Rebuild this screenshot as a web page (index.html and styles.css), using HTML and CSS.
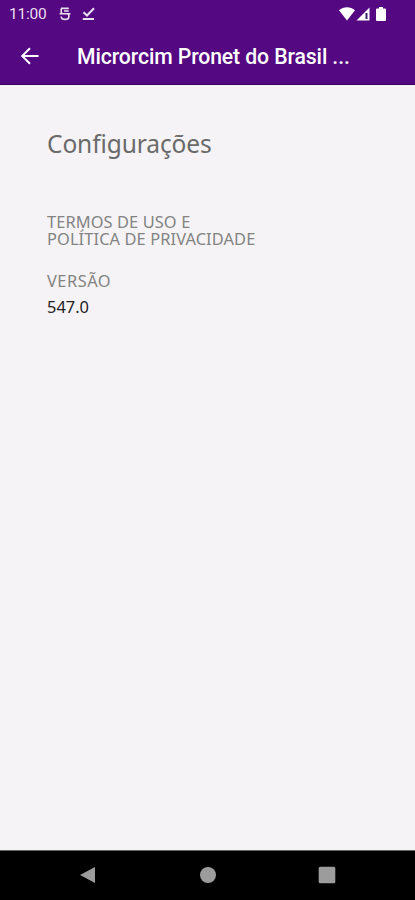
FILE: index.html
```
<!DOCTYPE html>
<html lang="pt-BR">

<head>
    <meta charset="UTF-8">
    <title>Configurações</title>
    <link rel="stylesheet" href="styles.css">
</head>

<body>
    <header class="top">
        <div class="status-bar">
            <span class="clock">11:00</span>
            <svg class="icon-s" width="12" height="14" viewBox="0 0 12 14">
                <path d="M2 1.4H9.8M2.2 1.4V5Q2.2 6.7 4 6.7H8Q9.8 6.7 9.8 8.5V10.2Q9.8 12.4 6 12.4Q2.2 12.4 2.2 9.6M.6 6.7H11.4M5 4H9.8" />
            </svg>
            <svg class="icon-check" width="13" height="14" viewBox="0 0 13 14">
                <path d="M1.5 5.2L5 8.5L12 1.2M.8 12H12" />
            </svg>
            <div class="status-right">
                <svg width="16" height="14" viewBox="0 0 16 14">
                    <path d="M0 3.3C4.5-.7 11.5-.7 16 3.3L8 13.5Z" />
                </svg>
                <svg width="14" height="14" viewBox="0 0 14 14">
                    <path d="M13.5.5V13.5H.5Z" />
                    <path class="signal-gap" d="M9.5 6H11.5V12H9.5Z" />
                </svg>
                <svg class="battery" width="10" height="14" viewBox="0 0 10 14">
                    <path d="M3 0H7V1.5H9Q10 1.5 10 2.5V13Q10 14 9 14H1Q0 14 0 13V2.5Q0 1.5 1 1.5H3Z" />
                </svg>
            </div>
        </div>
        <div class="toolbar">
            <svg class="back" width="18" height="18" viewBox="0 0 18 18">
                <path d="M17.5 9H1.5M9 1.2L1.2 9L9 16.8" />
            </svg>
            <div class="toolbar-title">Microrcim Pronet do Brasil ...</div>
        </div>
    </header>

    <main class="content">
        <h1>Configurações</h1>
        <p class="label terms">TERMOS DE USO E<br>POLÍTICA DE PRIVACIDADE</p>
        <p class="label version-label">VERSÃO</p>
        <p class="version">547.0</p>
    </main>

    <nav class="nav-bar">
        <svg width="18" height="18" viewBox="0 0 18 18">
            <path d="M16 1V17L1 9Z" />
        </svg>
        <svg width="18" height="18" viewBox="0 0 18 18">
            <circle cx="9" cy="9" r="8" />
        </svg>
        <svg width="18" height="18" viewBox="0 0 18 18">
            <rect x=".7" y=".7" width="16.6" height="16.6" rx="1.5" />
        </svg>
    </nav>
</body>

</html>
```
FILE: styles.css
```
body {
    margin: 0;
    height: 900px;
    display: flex;
    flex-direction: column;
    background-color: #f5f3f5;
    font-family: Roboto, sans-serif;
    overflow: hidden;
}

.top {
    box-sizing: border-box;
    height: 85px;
    background-color: #540881;
    border-bottom: 1px solid #38045f;
    color: #fff;
}

.status-bar {
    display: flex;
    align-items: center;
    height: 27px;
    padding: 0 29px 0 9px;
}

.clock {
    width: 50px;
    font-size: 15.5px;
    letter-spacing: -0.2px;
    color: #e9dff0;
}

.status-bar svg {
    fill: #fff;
}

.status-bar .icon-s,
.status-bar .icon-check {
    fill: none;
    stroke: #e9dff0;
    stroke-width: 1.6;
}

.status-bar .icon-check {
    margin-left: 11px;
    stroke-width: 2;
}

.status-right {
    display: flex;
    align-items: center;
    gap: 1px;
    margin-left: auto;
}

.status-bar .signal-gap {
    fill: #38206f;
}

.battery {
    margin-left: 5px;
}

.toolbar {
    display: flex;
    align-items: center;
    height: 57px;
    padding-left: 21px;
}

.back {
    fill: none;
    stroke: #fff;
    stroke-width: 2;
}

.toolbar-title {
    margin: 1px 0 0 38px;
    font-size: 21.2px;
    font-weight: 500;
    letter-spacing: -0.1px;
    white-space: nowrap;
}

.content {
    flex: 1;
    padding: 42px 47px 0;
    font-family: "Noto Sans", sans-serif;
}

h1 {
    margin: 0;
    font-size: 24.5px;
    line-height: 34px;
    font-weight: 400;
    letter-spacing: -0.1px;
    color: #6a6a6a;
}

.label {
    margin: 0;
    font-size: 16.4px;
    line-height: 17px;
    font-weight: 400;
    letter-spacing: 0.1px;
    color: #838383;
}

.terms {
    margin-top: 52px;
}

.version-label {
    margin-top: 25px;
    letter-spacing: 0.5px;
}

.version {
    margin: 9px 0 0;
    font-size: 16.4px;
    line-height: 18px;
    color: #222;
}

.nav-bar {
    box-sizing: border-box;
    display: flex;
    align-items: center;
    justify-content: space-between;
    height: 50px;
    padding: 0 79px 2px;
    background-color: #000;
    border-top: 1px solid #666;
}

.nav-bar svg {
    fill: #9c9c9c;
}
```
